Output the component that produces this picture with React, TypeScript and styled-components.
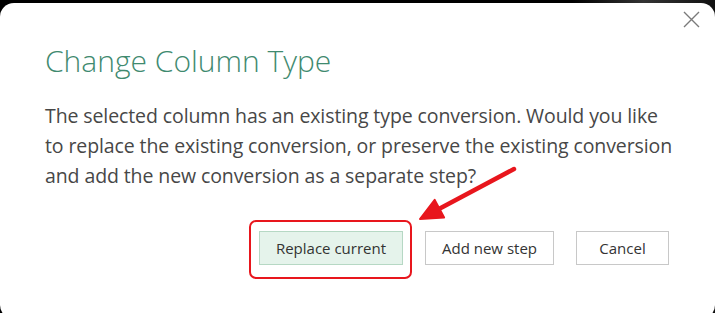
import React from 'react';
import styled, { createGlobalStyle } from 'styled-components';

const GlobalStyle = createGlobalStyle`
  html, body {
    margin: 0;
    padding: 0;
    background: #000;
  }
  body {
    font-family: "Open Sans", "Liberation Sans", sans-serif;
  }
`;

function App() {
  return (
    <Page>
      <GlobalStyle />
      <Dialog>
        <CloseButton aria-label="Close">
          <svg width="17" height="17" viewBox="0 0 17 17">
            <path d="M1 1 L16 16 M16 1 L1 16" stroke="#7a7a7a" strokeWidth="1.4" fill="none" />
          </svg>
        </CloseButton>
        <Title>Change Column Type</Title>
        <Message>
          The selected column has an existing type conversion. Would you like<br />
          to replace the existing conversion, or preserve the existing conversion<br />
          and add the new conversion as a separate step?
        </Message>
        <Actions>
          <Highlight>
            <Button primary>Replace current</Button>
          </Highlight>
          <Button>Add new step</Button>
          <Button>Cancel</Button>
          <Arrow width="110" height="62" viewBox="0 0 110 62">
            <path d="M99 3 L22 44" stroke="#e8161d" strokeWidth="4.5" strokeLinecap="round" fill="none" />
            <path d="M5 53 L19.7 33.9 L29.1 51.5 Z" fill="#e8161d" stroke="#e8161d" strokeWidth="2" strokeLinejoin="round" />
          </Arrow>
        </Actions>
      </Dialog>
    </Page>
  );
}

export default App;

const Page = styled.div`
width: 715px;
height: 313px;
padding-top: 3px;
box-sizing: border-box;
background: linear-gradient(90deg, #000 0%, #000 80%, #333 90%, #111 100%);
overflow: hidden;
`

const Dialog = styled.div`
position: relative;
height: 316px;
background: #fff;
border-radius: 14px;
padding: 38px 46px 0 45px;
box-sizing: border-box;
`

const CloseButton = styled.button`
position: absolute;
top: 8px;
right: 15px;
width: 17px;
height: 17px;
padding: 0;
border: none;
background: transparent;
display: flex;
`

const Title = styled.h1`
margin: 0;
font-family: "Open Sans", sans-serif;
font-weight: 300;
font-size: 30px;
line-height: 40px;
color: #3f8a6f;
`

const Message = styled.p`
margin: 20px 0 0;
font-size: 19.5px;
line-height: 30px;
color: #474747;
white-space: nowrap;
letter-spacing: -0.1px;
`

const Actions = styled.div`
position: relative;
display: flex;
justify-content: flex-end;
gap: 22px;
margin-top: 40px;
`

const Highlight = styled.div`
position: relative;
display: flex;

&::after {
  content: '';
  position: absolute;
  inset: -11px -9px -14px -10px;
  border: 2.5px solid #e8161d;
  border-radius: 7px;
  pointer-events: none;
}
`

const Button = styled.button<{ primary?: boolean }>`
height: 34px;
padding: 0 16px;
min-width: 93px;
font-family: "Open Sans", sans-serif;
font-size: 15px;
color: #333;
background: ${p => (p.primary ? '#e5f3eb' : '#fff')};
border: 1px solid ${p => (p.primary ? '#b6d8c4' : '#c8c8c8')};
border-radius: 0;
`

const Arrow = styled.svg`
position: absolute;
left: 370px;
top: -65px;
pointer-events: none;
`
